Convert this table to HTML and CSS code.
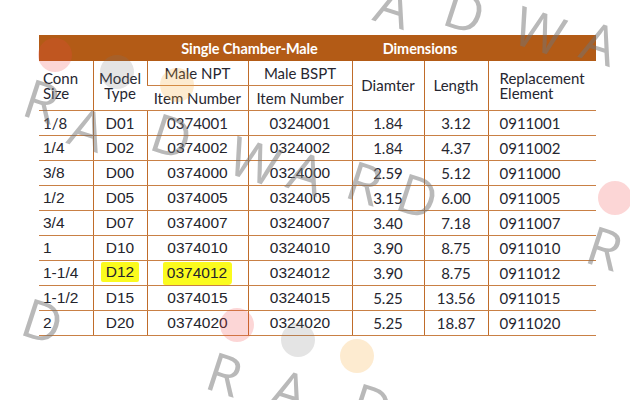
FILE: index.html
```html
<!DOCTYPE html>
<html>
<head>
<meta charset="utf-8">
<link rel="stylesheet" href="styles.css">
</head>
<body>
<div class="page">
  <table class="spec">
    <colgroup>
      <col class="w1"><col class="w2"><col class="w3"><col class="w4"><col class="w5"><col class="w6"><col class="w7">
    </colgroup>
    <thead>
      <tr class="bar">
        <th colspan="2"></th>
        <th colspan="2">Single Chamber-Male</th>
        <th colspan="2">Dimensions</th>
        <th></th>
      </tr>
      <tr class="sub">
        <th rowspan="2" class="left">Conn<br>Size</th>
        <th rowspan="2">Model<br>Type</th>
        <th class="split">Male NPT</th>
        <th class="split">Male BSPT</th>
        <th rowspan="2">Diamter</th>
        <th rowspan="2">Length</th>
        <th rowspan="2" class="left repl">Replacement<br>Element</th>
      </tr>
      <tr class="sub">
        <th>Item Number</th>
        <th>Item Number</th>
      </tr>
    </thead>
    <tbody>
      <tr><td class="left">1/8</td><td>D01</td><td>0374001</td><td>0324001</td><td>1.84</td><td>3.12</td><td class="left repl">0911001</td></tr>
      <tr><td class="left a">1/4</td><td class="a">D02</td><td class="a">0374002</td><td class="a">0324002</td><td>1.84</td><td>4.37</td><td class="left repl">0911002</td></tr>
      <tr><td class="left a">3/8</td><td class="a">D00</td><td class="a">0374000</td><td class="a">0324000</td><td>2.59</td><td>5.12</td><td class="left repl">0911000</td></tr>
      <tr><td class="left a">1/2</td><td class="a">D05</td><td class="a">0374005</td><td class="a">0324005</td><td>3.15</td><td>6.00</td><td class="left repl">0911005</td></tr>
      <tr><td class="left a">3/4</td><td class="a">D07</td><td class="a">0374007</td><td class="a">0324007</td><td>3.40</td><td>7.18</td><td class="left repl">0911007</td></tr>
      <tr><td class="left a">1</td><td class="a">D10</td><td class="a">0374010</td><td class="a">0324010</td><td>3.90</td><td>8.75</td><td class="left repl">0911010</td></tr>
      <tr><td class="left a">1-1/4</td><td class="a"><span class="hl hl1">D12</span></td><td class="a"><span class="hl hl2">0374012</span></td><td class="a">0324012</td><td>3.90</td><td>8.75</td><td class="left repl">0911012</td></tr>
      <tr><td class="left a">1-1/2</td><td class="a">D15</td><td class="a">0374015</td><td class="a">0324015</td><td>5.25</td><td>13.56</td><td class="left repl">0911015</td></tr>
      <tr><td class="left a">2</td><td class="a">D20</td><td class="a">0374020</td><td class="a">0324020</td><td>5.25</td><td>18.87</td><td class="left repl">0911020</td></tr>
    </tbody>
  </table>

  <div class="wm" aria-hidden="true">
    <span class="dot red d1"></span>
    <span class="dot grey d2"></span>
    <span class="dot orange d3"></span>
    <span class="dot red d4"></span>
    <span class="dot red d5"></span>
    <span class="dot grey d6"></span>
    <span class="dot orange d7"></span>

    <span class="ch t1">A</span>
    <span class="ch t2">D</span>
    <span class="ch t3">W</span>
    <span class="ch t4">A</span>

    <span class="ch m1">R</span>
    <span class="ch m2">A</span>
    <span class="ch m3">D</span>
    <span class="ch m4">W</span>
    <span class="ch m5">A</span>
    <span class="ch m6">R</span>
    <span class="ch m7">D</span>

    <span class="ch r1">R</span>

    <span class="ch b1">D</span>
    <span class="ch b2">R</span>
    <span class="ch b3">A</span>
    <span class="ch b4">D</span>
  </div>
</div>
</body>
</html>
```

FILE: styles.css
```css
html, body {
  margin: 0;
  padding: 0;
  background: #ffffff;
}

.page {
  position: relative;
  width: 630px;
  height: 400px;
  overflow: hidden;
  padding-top: 35px;
  box-sizing: border-box;
}

.spec {
  margin-left: 39px;
  width: 557px;
  table-layout: fixed;
  border-collapse: collapse;
  font-family: Lato, "Liberation Sans", sans-serif;
  font-size: 15px;
  color: #262630;
}

.w1 { width: 54px; }
.w2 { width: 54px; }
.w3 { width: 101px; }
.w4 { width: 104px; }
.w5 { width: 72px; }
.w6 { width: 64px; }
.w7 { width: 108px; }

.spec th,
.spec td {
  padding: 0;
  text-align: center;
  vertical-align: middle;
  font-weight: normal;
  border-left: 1px solid #c06c2a;
  border-bottom: 1px solid #c98045;
  overflow: visible;
  white-space: nowrap;
}

.spec tr > :first-child {
  border-left: none;
}

.spec tr.bar th {
  background: #b35b16;
  color: #ffffff;
  font-weight: 700;
  font-size: 14.5px;
  height: 26px;
  border: none;
  letter-spacing: -0.1px;
}

.spec tr.sub th {
  height: 24px;
  line-height: 15px;
}

.spec tr.sub th.left {
  text-align: left;
  padding-left: 4px;
}

.spec tr.sub th.repl {
  padding-left: 11px;
}

.spec td {
  height: 24px;
}

.spec td.left {
  text-align: left;
  padding-left: 4px;
}

.spec td.repl {
  padding-left: 11px;
}

.spec tr > .split {
  border-bottom: 1px solid #c98045;
}

.spec td.a {
  font-family: "Liberation Sans", Arial, sans-serif;
  font-size: 15.5px;
  color: #24242c;
}

.hl {
  display: inline-block;
  background: #fbfb1e;
  line-height: 20px;
  border-radius: 2px;
}

.hl1 {
  padding: 0 5px;
  transform: translateY(-1px);
}

.hl2 {
  padding: 1px 5px 2px 4px;
  border-radius: 2px 3px 4px 2px;
}

/* watermark overlay */
.wm {
  position: absolute;
  left: 0;
  top: 0;
  width: 630px;
  height: 400px;
  pointer-events: none;
}

.dot {
  position: absolute;
  width: 34px;
  height: 34px;
  border-radius: 50%;
}

.red { background: rgba(240, 70, 70, 0.22); }
.grey { background: rgba(120, 120, 120, 0.2); }
.orange { background: rgba(248, 170, 60, 0.24); }

.d1 { left: 38px; top: 38px; }
.d2 { left: 100px; top: 55px; }
.d3 { left: 160px; top: 68px; }
.d4 { left: 598px; top: 181px; }
.d5 { left: 220px; top: 308px; }
.d6 { left: 281px; top: 323px; }
.d7 { left: 340px; top: 339px; }

.ch {
  position: absolute;
  width: 60px;
  height: 60px;
  line-height: 60px;
  text-align: center;
  font-family: "Open Sans", "DejaVu Sans", sans-serif;
  font-weight: 400;
  font-size: 54px;
  color: rgba(115, 115, 115, 0.5);
  transform: rotate(18deg);
}

.t1 { left: 364px; top: -25px; }
.t2 { left: 435px; top: -20px; }
.t3 { left: 510px; top: 0px; }
.t4 { left: 570px; top: 12px; }

.m1 { left: 12px; top: 70px; }
.m2 { left: 58px; top: 98px; }
.m3 { left: 142px; top: 105px; }
.m4 { left: 225px; top: 130px; }
.m5 { left: 277px; top: 142px; }
.m6 { left: 335px; top: 152px; }
.m7 { left: 388px; top: 165px; }

.r1 { left: 575px; top: 217px; }

.b1 { left: 13px; top: 290px; }
.b2 { left: 195px; top: 343px; }
.b3 { left: 260px; top: 360px; }
.b4 { left: 342px; top: 375px; }
```
